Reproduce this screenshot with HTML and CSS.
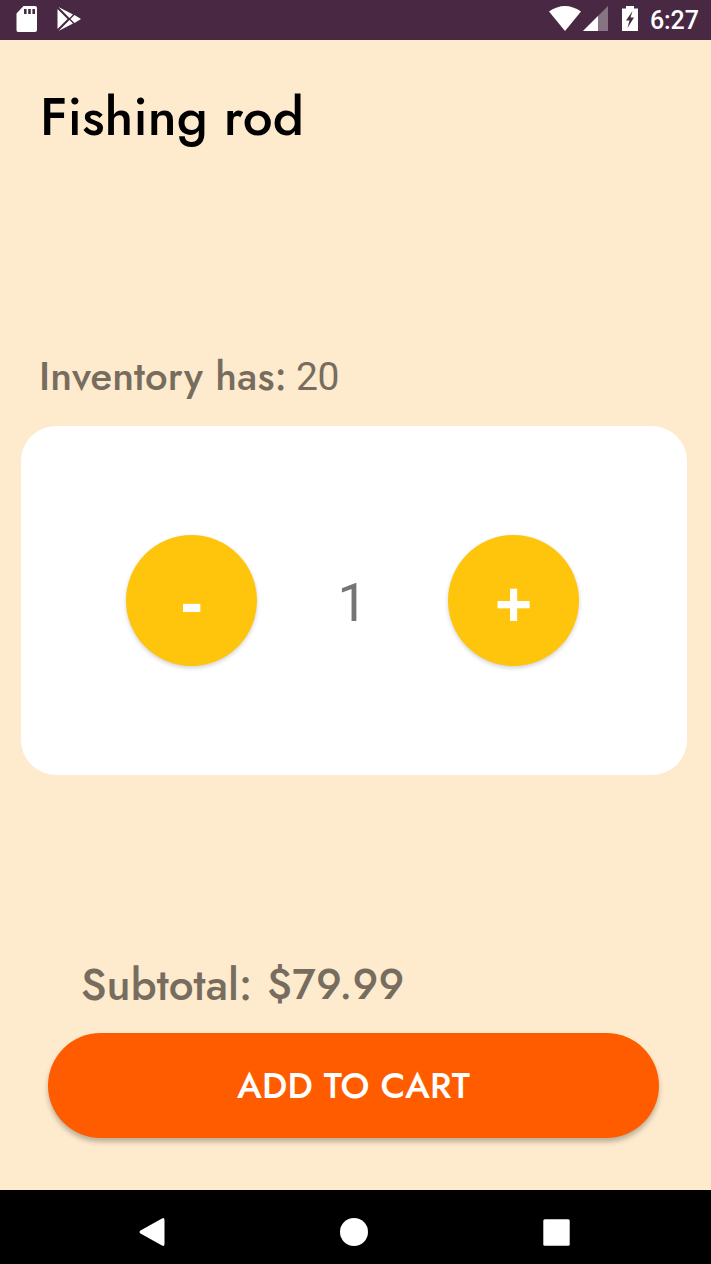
FILE: index.html
```html
<!DOCTYPE html>
<html lang="en">
<head>
<meta charset="utf-8">
<title>Fishing rod</title>
<link rel="stylesheet" href="styles.css">
</head>
<body>
<div class="screen">
  <header class="status-bar">
    <svg class="icon-sd" viewBox="0 0 22 27"><path fill-rule="evenodd" d="M7.5 0H19Q21 0 21 2V24Q21 26 19 26H2Q.5 26 .5 24V7.5ZM8 3V8H10.6V3ZM12.2 3V8H14.8V3ZM16.4 3V8H19V3Z"/></svg>
    <svg class="icon-play" viewBox="0 0 24 26"><path d="M.5 3L10.500 13L.5 23ZM1.500 1L16 8.500L12.500 12ZM1.500 25L12.500 14L16 17.500ZM17.500 9L24 13L17.500 17L13.500 13Z"/></svg>
    <span class="status-space"></span>
    <svg class="icon-wifi" viewBox="0 0 32 25"><path d="M0 5.5Q16-5.5 32 5.5L16 25Z"/></svg>
    <svg class="icon-signal" viewBox="0 0 25 25"><path opacity=".35" d="M25 0V25H0Z"/><path d="M15 10V25H0Z"/></svg>
    <svg class="icon-battery" viewBox="0 0 16 25"><path fill-rule="evenodd" d="M4 0H12V2.5H16V25H0V2.5H4ZM10.500 5L4 14.500H7.500L5.500 22L12 11.500H8.500Z"/></svg>
    <time class="clock">6:27</time>
  </header>
  <main class="content">
    <h1 class="title">Fishing rod</h1>
    <p class="inventory"><span class="inventory-label">Inventory has:</span><span class="inventory-count">20</span></p>
    <section class="card">
      <button class="step step-minus">-</button>
      <span class="quantity">1</span>
      <button class="step step-plus">+</button>
    </section>
    <p class="subtotal"><span class="subtotal-label">Subtotal:</span><span class="subtotal-value">$79.99</span></p>
    <button class="add">ADD TO CART</button>
  </main>
  <nav class="nav-bar">
    <svg class="nav-back" viewBox="0 0 26 28"><path d="M23 .4Q25.500 -.6 25.500 2V26Q25.500 28.600 23 27.600L1.500 15.500Q-.5 14 1.500 12.500Z"/></svg>
    <svg class="nav-home" viewBox="0 0 28 28"><circle cx="14" cy="14" r="14"/></svg>
    <svg class="nav-recent" viewBox="0 0 27 27"><rect x=".3" y=".3" width="26.400" height="26.400" rx="1.500"/></svg>
  </nav>
</div>
</body>
</html>
```
FILE: styles.css
```css
* { box-sizing: border-box; }
body { margin: 0; }
h1, p { margin: 0; font-weight: 500; white-space: nowrap; }
button { border: 0; padding: 0; color: #fff; }
svg { display: block; flex: none; fill: #fff; }
.screen {
  display: flex; flex-direction: column;
  width: 711px; height: 1264px; overflow: hidden;
  background: #feeacd;
  font-family: Jost, Futura, Lato, sans-serif;
}
.status-bar {
  display: flex; align-items: flex-start;
  height: 40px; padding: 6px 12px 0 16px;
  background: #482842;
}
.icon-sd { width: 22px; height: 27px; }
.icon-play { width: 24px; height: 26px; margin-left: 19px; }
.status-space { flex: 1; }
.icon-wifi { width: 32px; height: 25px; }
.icon-signal { width: 25px; height: 25px; margin-left: 2px; }
.icon-battery { width: 16px; height: 25px; margin-left: 14px; }
.clock {
  width: 49px; margin-left: 12px;
  color: #fff; font: 500 25px/30px Roboto, sans-serif; letter-spacing: -.1px;
}
.content { display: flex; flex-direction: column; height: 1150px; }
.title {
  margin: 46px 0 0 40px;
  color: #000; font-size: 53px; line-height: 62px; letter-spacing: .1px;
}
.inventory {
  display: flex; align-items: baseline;
  height: 46px; margin: 205px 0 0 39px;
  color: #776d5f; font-size: 40px; line-height: 46px;
}
.inventory-label { width: 257px; letter-spacing: .15px; }
.inventory-count { font-family: Roboto, sans-serif; font-weight: 400; font-size: 39px; letter-spacing: -.3px; }
.card {
  display: flex; align-items: center;
  width: 666px; height: 349px; margin: 27px 0 0 21px; padding-left: 105px;
  border-radius: 35px; background: #fff;
}
.step {
  width: 131px; height: 131px; border-radius: 50%;
  background: #ffc40c; box-shadow: 0 2px 4px rgba(0, 0, 0, .18);
  font: 700 66px/131px "Open Sans", sans-serif;
}
.step-plus { padding-top: 2px; }
.quantity {
  width: 191px; padding-top: 4px; text-align: center;
  color: #757575; font: 400 53px/62px Roboto, sans-serif;
}
.subtotal {
  display: flex; margin: 184px 0 0 81px;
  color: #776d5f; font-size: 44px; line-height: 52px;
}
.subtotal-label { width: 186px; letter-spacing: .1px; }
.subtotal-value { font-size: 42px; letter-spacing: .3px; }
.add {
  width: 611px; height: 105px; margin: 22px 0 0 48px;
  border-radius: 53px; background: #ff5c00;
  box-shadow: 0 4px 5px rgba(0, 0, 0, .25);
  font: 500 36px/105px Jost, Futura, Lato, sans-serif; letter-spacing: .2px;
}
.nav-bar { display: flex; align-items: center; height: 74px; padding: 10px 0 0 139px; background: #000; }
.nav-back { width: 26px; height: 28px; }
.nav-home { width: 28px; height: 28px; margin-left: 175px; }
.nav-recent { width: 27px; height: 27px; margin-left: 175px; }
```
